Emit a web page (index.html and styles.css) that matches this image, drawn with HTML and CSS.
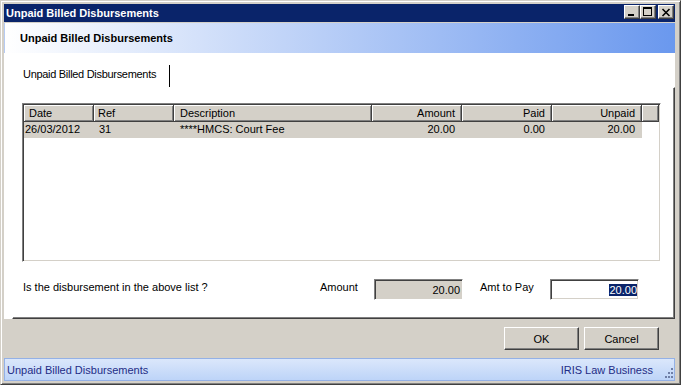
FILE: index.html
```html
<!DOCTYPE html>
<html lang="en">
<head>
  <meta charset="UTF-8">
  <title>Unpaid Billed Disbursements</title>
  <link rel="stylesheet" href="styles.css">
</head>
<body>
  <div class="window">
    <div class="titlebar">
      <span class="title">Unpaid Billed Disbursements</span>
      <div class="caption-buttons">
        <div class="caption-btn">
          <svg width="14" height="12" viewBox="0 0 14 12"><rect x="3" y="8" width="6" height="2" fill="#000"/></svg>
        </div>
        <div class="caption-btn">
          <svg width="14" height="12" viewBox="0 0 14 12"><path d="M2 1h9v9H2zM3 3v6h7V3z" fill="#000" fill-rule="evenodd"/></svg>
        </div>
        <div class="caption-btn close">
          <svg width="14" height="12" viewBox="0 0 14 12"><path d="M3.5 3L10.5 10M10.5 3L3.5 10" stroke="#000" stroke-width="1.6"/></svg>
        </div>
      </div>
    </div>

    <div class="banner">Unpaid Billed Disbursements</div>

    <div class="panel">
      <div class="tabs">
        <div class="tab-strip">
          <div class="tab">Unpaid Billed Disbursements</div>
        </div>
        <div class="tab-page">
          <div class="listview">
            <div class="list-head">
              <div class="c-date">Date</div>
              <div class="c-ref">Ref</div>
              <div class="c-desc">Description</div>
              <div class="num">Amount</div>
              <div class="num">Paid</div>
              <div class="num">Unpaid</div>
              <div></div>
            </div>
            <div class="list-row">
              <div class="c-date">26/03/2012</div>
              <div class="c-ref">31</div>
              <div class="c-desc">****HMCS: Court Fee</div>
              <div class="num">20.00</div>
              <div class="num">0.00</div>
              <div class="num">20.00</div>
              <div class="filler"></div>
            </div>
          </div>

          <div class="form-row">
            <div class="question">Is the disbursement in the above list ?</div>
            <div class="label-amount">Amount</div>
            <div class="field readonly">20.00</div>
            <div class="label-pay">Amt to Pay</div>
            <div class="field input"><span class="selected">20.00</span></div>
          </div>
        </div>
      </div>
    </div>

    <div class="buttons">
      <button>OK</button>
      <button>Cancel</button>
    </div>

    <div class="statusbar">
      <span>Unpaid Billed Disbursements</span>
      <span class="product">IRIS Law Business</span>
      <svg class="grip" width="10" height="10" viewBox="0 0 10 10">
        <rect x="8" y="0" width="2" height="2" fill="#6f7fa6"/>
        <rect x="5" y="4" width="2" height="2" fill="#6f7fa6"/>
        <rect x="8" y="4" width="2" height="2" fill="#6f7fa6"/>
        <rect x="2" y="8" width="2" height="2" fill="#6f7fa6"/>
        <rect x="5" y="8" width="2" height="2" fill="#6f7fa6"/>
        <rect x="8" y="8" width="2" height="2" fill="#6f7fa6"/>
      </svg>
    </div>
  </div>
</body>
</html>
```

FILE: styles.css
```css
body {
  margin: 0;
  font-family: 'Liberation Sans', Arial, sans-serif;
  font-size: 11px;
  color: #000;
}
.window {
  width: 681px;
  height: 385px;
  box-sizing: border-box;
  background: #d4d0c8;
  border: 1px solid;
  border-color: #d4d0c8 #404040 #404040 #d4d0c8;
  box-shadow: inset 1px 1px #fff, inset -1px -1px #808080;
  padding: 3px 5px 3px 3px;
  display: flex;
  flex-direction: column;
}
.titlebar {
  height: 18px;
  flex: none;
  background: #0a246a;
  color: #fff;
  font-weight: bold;
  display: flex;
  justify-content: space-between;
  align-items: flex-start;
  padding: 0 1px 0 2px;
  margin-bottom: 1px;
}
.title {
  line-height: 18px;
}
.caption-buttons {
  display: flex;
  padding-top: 1px;
}
.caption-btn {
  width: 16px;
  height: 14px;
  box-sizing: border-box;
  background: #d4d0c8;
  border: 1px solid;
  border-color: #fff #404040 #404040 #fff;
  box-shadow: inset -1px -1px #808080;
}
.caption-btn svg {
  display: block;
}
.caption-btn.close {
  margin-left: 2px;
}
.banner {
  height: 30px;
  flex: none;
  box-sizing: border-box;
  background: linear-gradient(to right, #fff, #6a98ee);
  border-left: 1px solid #b6cbf3;
  padding-left: 15px;
  font-weight: bold;
  line-height: 30px;
}
.panel {
  height: 266px;
  flex: none;
  box-sizing: border-box;
  background: #fff;
  padding: 11px 0 0 8px;
}
.tabs {
  height: 255px;
  display: flex;
  flex-direction: column;
}
.tab-strip {
  height: 23px;
  display: flex;
}
.tab {
  margin-top: 1px;
  height: 22px;
  width: 158px;
  box-sizing: border-box;
  border-right: 1px solid #000;
  padding-left: 11px;
  line-height: 18px;
  letter-spacing: -0.3px;
}
.tab-page {
  flex: 1;
  border-left: 1px solid #fff;
  border-top: 1px solid #fff;
  border-right: 1px solid #404040;
  border-bottom: 1px solid #404040;
  box-shadow: inset -1px -1px #808080;
  padding: 15px 0 0 9px;
}
.listview {
  width: 639px;
  height: 159px;
  box-sizing: border-box;
  border: 1px solid;
  border-color: #808080 #fff #fff #808080;
  box-shadow: inset 1px 1px #404040, inset -1px -1px #d4d0c8;
  padding: 1px;
  background: #fff;
}
.list-head, .list-row {
  display: grid;
  grid-template-columns: 70px 80px 198px 90px 90px 90px 1fr;
}
.list-head > div {
  height: 17px;
  box-sizing: border-box;
  background: #d4d0c8;
  border-right: 1px solid #404040;
  border-bottom: 1px solid #404040;
  box-shadow: inset 1px 1px #fff, inset -1px -1px #808080;
  padding: 1px 6px 0 5px;
  line-height: 15px;
  white-space: nowrap;
}
.list-head .c-ref {
  padding-left: 4px;
}
.list-head .c-desc {
  padding-left: 6px;
}
.list-row > div {
  height: 16px;
  box-sizing: border-box;
  background: #d4d0c8;
  padding: 1px 7px 0 5px;
  line-height: 12px;
  white-space: nowrap;
}
.list-row .c-date {
  padding-left: 1px;
}
.list-row .c-desc {
  padding-left: 6px;
}
.list-row .filler {
  background: #fff;
}
.num {
  text-align: right;
}
.form-row {
  display: flex;
  margin-top: 17px;
  height: 21px;
}
.question {
  width: 298px;
  box-sizing: border-box;
  padding: 2px 0 0 1px;
}
.label-amount {
  width: 54px;
  padding-top: 2px;
}
.label-pay {
  width: 70px;
  margin-left: 17px;
  padding-top: 2px;
}
.field {
  width: 89px;
  height: 21px;
  box-sizing: border-box;
  border: 1px solid;
  border-color: #808080 #fff #fff #808080;
  box-shadow: inset 1px 1px #404040, inset -1px -1px #d4d0c8;
  display: flex;
  align-items: center;
  justify-content: flex-end;
  padding: 1px 2px 0 0;
}
.field.readonly {
  background: #d4d0c8;
}
.field.input {
  background: #fff;
  padding-right: 1px;
}
.selected {
  background: #0a246a;
  color: #fff;
  line-height: 12px;
}
.buttons {
  height: 39px;
  flex: none;
  box-sizing: border-box;
  display: flex;
  justify-content: flex-end;
  gap: 5px;
  padding: 8px 16px 0 0;
}
button {
  width: 75px;
  height: 23px;
  padding: 0;
  font: inherit;
  color: #000;
  background: #d4d0c8;
  border: 1px solid;
  border-color: #fff #404040 #404040 #fff;
  box-shadow: inset -1px -1px #808080;
}
.statusbar {
  height: 23px;
  flex: none;
  box-sizing: border-box;
  border: 1px solid #94b1e6;
  background: linear-gradient(#dbe7fb, #bdd4f8);
  display: flex;
  align-items: center;
  padding: 0 1px 0 2px;
  color: #1f2d86;
}
.product {
  margin-left: auto;
}
.grip {
  margin-left: 10px;
  align-self: flex-end;
  margin-bottom: 2px;
}
```
